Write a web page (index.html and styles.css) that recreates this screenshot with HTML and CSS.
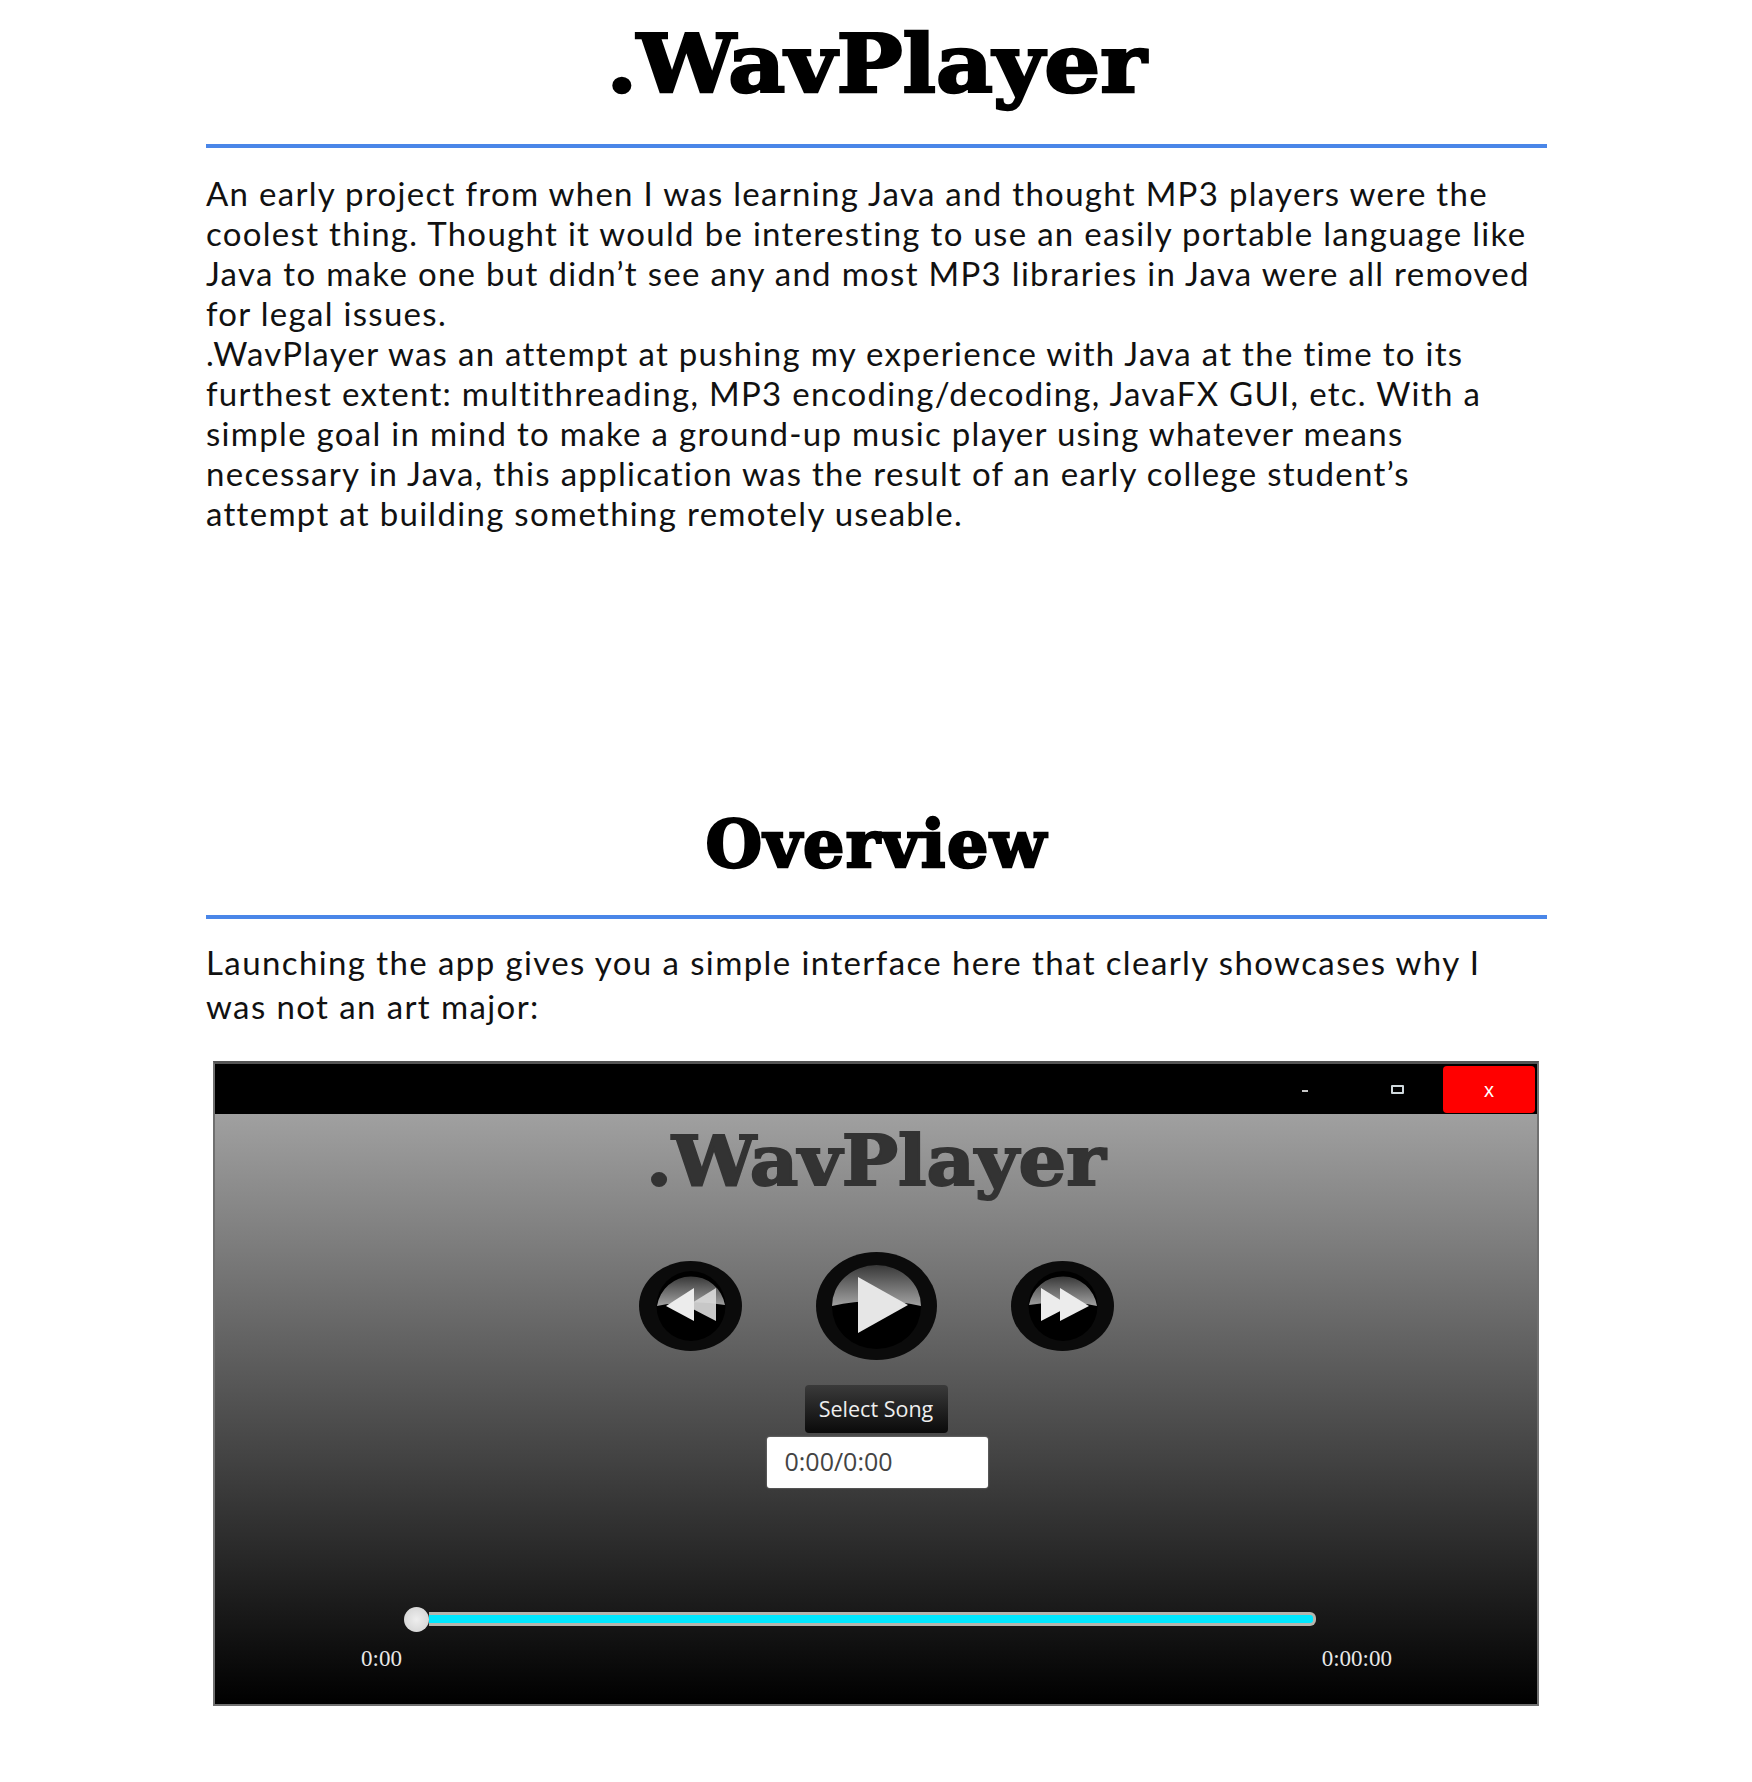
FILE: index.html
```html
<!DOCTYPE html>
<html lang="en">
<head>
<meta charset="utf-8">
<title>.WavPlayer</title>
<link rel="stylesheet" href="styles.css">
</head>
<body>
<main class="page">
  <h1 class="heading heading-main"><span class="display">.WavPlayer</span></h1>
  <div class="intro">
    <p>An early project from when I was learning Java and thought MP3 players were the<br>coolest thing. Thought it would be interesting to use an easily portable language like<br>Java to make one but didn’t see any and most MP3 libraries in Java were all removed<br>for legal issues.</p>
    <p>.WavPlayer was an attempt at pushing my experience with Java at the time to its<br>furthest extent: multithreading, MP3 encoding/decoding, JavaFX GUI, etc. With a<br>simple goal in mind to make a ground-up music player using whatever means<br>necessary in Java, this application was the result of an early college student’s<br>attempt at building something remotely useable.</p>
  </div>
  <h2 class="heading heading-second">Overview</h2>
  <p class="lead">Launching the app gives you a simple interface here that clearly showcases why I<br>was not an art major:</p>

  <section class="app">
    <div class="titlebar">
      <span class="win-btn"><i class="minimize"></i></span>
      <span class="win-btn"><i class="restore"></i></span>
      <span class="win-btn close">x</span>
    </div>
    <div class="app-body">
      <div class="app-title"><span class="display">.WavPlayer</span></div>
      <div class="controls">
        <svg class="btn-side" viewBox="0 0 103 90" aria-hidden="true">
          <defs>
            <linearGradient id="gloss" x1="0" y1="0" x2="0" y2="1"><stop offset="0" stop-color="#383838"/><stop offset="1" stop-color="#a2a2a2"/></linearGradient>
          </defs>
          <ellipse cx="51.500" cy="45" rx="51.500" ry="45" fill="#0b0b0b"/>
          <ellipse cx="52" cy="45" rx="34.500" ry="35" fill="#000"/>
          <path d="M18 45A34.500 35 0 0 1 86 44Q52 38 18 45Z" fill="url(#gloss)"/>
          <path d="M48 45L77 27V60Z" fill="#d8d8d8" fill-opacity=".92"/>
          <path d="M27 45L55 27V60Z" fill="#ececec"/>
        </svg>
        <svg class="btn-play" viewBox="0 0 121 108" aria-hidden="true">
          <ellipse cx="60.500" cy="54" rx="60.500" ry="54" fill="#0b0b0b"/>
          <ellipse cx="60.500" cy="55" rx="44.500" ry="42" fill="#000"/>
          <path d="M16 54A44.500 41 0 0 1 105 54Q60 44 16 54Z" fill="url(#gloss)"/>
          <path d="M42 25L92 53L42 81Z" fill="#e6e6e6"/>
        </svg>
        <svg class="btn-side" viewBox="0 0 103 90" aria-hidden="true">
          <ellipse cx="51.500" cy="45" rx="51.500" ry="45" fill="#0b0b0b"/>
          <ellipse cx="52" cy="45" rx="34.500" ry="35" fill="#000"/>
          <path d="M18 44A34.500 35 0 0 1 86 45Q52 38 18 44Z" fill="url(#gloss)"/>
          <path d="M30 27L59 45L30 60Z" fill="#ececec"/>
          <path d="M49 27L78 45L49 60Z" fill="#ececec"/>
        </svg>
      </div>
      <div class="select-song">Select Song</div>
      <div class="time-field">0:00/0:00</div>
      <div class="slider"><span class="thumb"></span><span class="track"></span></div>
      <div class="times"><span>0:00</span><span>0:00:00</span></div>
    </div>
  </section>
</main>
</body>
</html>
```
FILE: styles.css
```css
html, body { margin: 0; padding: 0; background: #fff; }
body { width: 1752px; height: 1782px; overflow: hidden; font-family: "Lato", "Open Sans", sans-serif; color: #111; }
.page { width: 1341px; margin-left: 206px; }
p { margin: 0; }
.display { display: inline-block; transform: scaleX(1.1); }
.heading {
  margin: 0;
  box-sizing: border-box;
  text-align: center;
  font-family: "DejaVu Serif", serif;
  font-weight: 700;
  color: #000;
  border-bottom: 4px solid #4a86e8;
  -webkit-text-stroke: 2.500px #000;
}
.heading-main { height: 148px; padding-top: 14px; font-size: 80px; line-height: 100px; }
.heading-second { height: 110px; font-size: 65px; line-height: 71px; letter-spacing: 1.5px; }
.intro { padding-top: 25px; height: 661px; box-sizing: border-box; font-size: 33px; line-height: 40px; letter-spacing: 1.3px; white-space: nowrap; }
.lead { padding-top: 21px; font-size: 33px; line-height: 44px; letter-spacing: 1.4px; white-space: nowrap; }

.app { box-sizing: border-box; width: 1326px; height: 645px; margin: 33px 0 0 7px; border: 2px solid #707070; border-top: 3px solid #555; background: #000; display: flex; flex-direction: column; }
.titlebar { flex: none; height: 50px; background: #000; display: flex; justify-content: flex-end; padding: 2px 2px 0 0; box-sizing: border-box; font-family: "Liberation Sans", sans-serif; color: #ddd; }
.win-btn { width: 92px; height: 47px; display: flex; align-items: center; justify-content: center; font-size: 20px; }
.minimize { display: block; width: 6px; height: 2px; background: #c8c8c8; margin-top: 2px; }
.restore { display: block; width: 9px; height: 5px; border: 2px solid #cfd8dc; border-radius: 1px; }
.close { background: #f00; color: #fff; border-radius: 4px; font-size: 20px; padding-top: 2px; box-sizing: border-box; }
.app-body { flex: 1; background: linear-gradient(#a0a0a0, #000); display: flex; flex-direction: column; align-items: center; }
.app-title { margin-top: 14px; height: 60px; font-family: "DejaVu Serif", serif; font-weight: 700; font-size: 70px; line-height: 66px; color: #333; -webkit-text-stroke: 2px #333; }
.app-title .display { transform: scaleX(1.07); }
.controls { margin-top: 64px; height: 108px; display: flex; align-items: center; gap: 74px; }
.btn-side { display: block; width: 103px; height: 90px; }
.btn-play { display: block; width: 121px; height: 108px; }
.select-song { margin-top: 25px; box-sizing: border-box; width: 143px; height: 48px; border-radius: 4px; background: linear-gradient(#3a3a3a, #0a0a0a); color: #eee; font-family: "Open Sans", sans-serif; font-size: 21.500px; line-height: 48px; text-align: center; }
.time-field { margin-top: 4px; margin-left: 2px; box-sizing: border-box; width: 221px; height: 51px; padding-left: 18px; border-radius: 3px; background: #fff; color: #444; font-family: "Open Sans", sans-serif; font-size: 25px; line-height: 49px; box-shadow: 0 0 2px #999; }
.slider { margin-top: 118px; margin-right: 32px; width: 912px; height: 26px; display: flex; align-items: center; }
.thumb { flex: none; width: 25px; height: 25px; border-radius: 50%; background: radial-gradient(#eee, #d8d8d8 70%, #aaa); }
.track { flex: 1; box-sizing: border-box; height: 14px; background: #00e8ff; border: 3px solid #b5b5ae; border-left: 0; border-radius: 0 6px 6px 0; }
.times { margin-top: 14px; width: 1031px; margin-left: 1px; display: flex; justify-content: space-between; font-family: "Liberation Serif", serif; font-size: 23px; line-height: 26px; color: #e8e8e8; }
```
